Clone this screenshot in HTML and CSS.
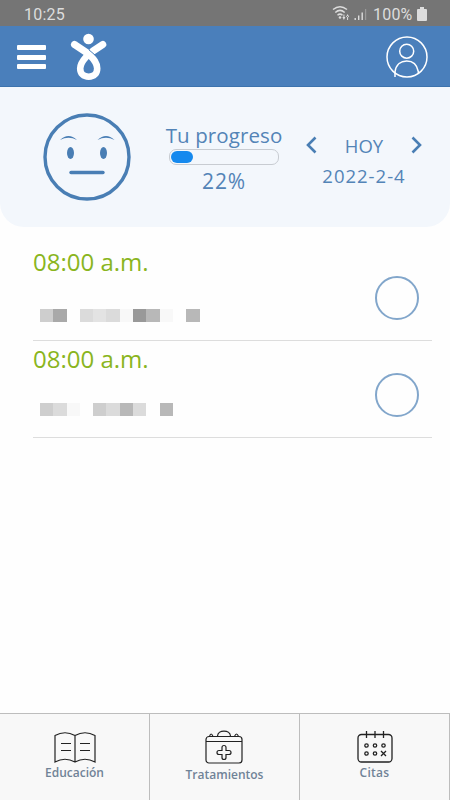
FILE: index.html
```
<!DOCTYPE html>
<html lang="es">
<head>
    <meta charset="UTF-8">
    <title>Mi progreso</title>
    <link rel="stylesheet" href="styles.css">
</head>
<body>
    <div class="status">
        <span class="clock">10:25</span>
        <svg class="signal" width="38" height="18" viewBox="0 0 38 18">
            <g fill="none" stroke="#ddd" stroke-width="1.5">
                <path d="M1 6.500Q8 1 15 6.500"/>
                <path d="M3.300 9.500Q8 5.300 12.700 9.500"/>
                <path d="M5.500 12.200Q8 10 10.500 12.200"/>
            </g>
            <circle cx="8" cy="14.500" r="1.300" fill="#ddd"/>
            <path d="M10.400 14h3l-1.500 3zM14 14h3.200l-1.600-3zM11.400 11.500h1v3h-1zM15.100 13h1v4h-1z" fill="#ddd"/>
            <path d="M22.500 15h1.400v2h-1.400zM26 12.500h1.400V17H26zM29.500 9.500h1.400V17h-1.400z" fill="#ddd"/>
            <path d="M33 6h1.200v11H33z" fill="#999"/>
        </svg>
        <span class="level">100%</span>
        <svg class="battery" width="10" height="14" viewBox="0 0 10 14">
            <path d="M3 0h4v2h2q1 0 1 1v10q0 1-1 1H1q-1 0-1-1V3q0-1 1-1h2z" fill="#ddd"/>
        </svg>
    </div>

    <div class="navbar">
        <div class="menu"><i></i><i></i><i></i></div>
        <svg class="logo" width="38" height="48" viewBox="0 0 38 48">
            <circle cx="18.500" cy="6" r="5.300" fill="#fff"/>
            <g fill="none" stroke="#fff" stroke-linecap="round">
                <path d="M4.500 11.500L18 20.500" stroke-width="7"/>
                <path d="M32.800 11.500L23 18" stroke-width="7"/>
                <path d="M18.700 21C15 25.500 10.200 29 10.200 35.500C10.200 40.500 13.500 43.700 18.700 43.700S27.200 40.500 27.200 35.500C27.200 29 22.500 25 18.700 21Z" stroke-width="6.600"/>
            </g>
            <path d="M18.500 16.500L25 22" stroke="#4a7fbb" stroke-width="1"/>
        </svg>
        <svg class="user" width="42" height="42" viewBox="0 0 42 42" fill="none" stroke="#fff" stroke-width="1.500">
            <circle cx="21" cy="21" r="20"/>
            <circle cx="20.700" cy="15.200" r="7"/>
            <path d="M9 41V36C10 28.500 15 25 20.700 25S31 28.500 32.300 35.500V38"/>
        </svg>
    </div>

    <div class="summary">
        <svg class="face" width="88" height="88" viewBox="0 0 88 88">
            <circle cx="44" cy="44" r="42" fill="none" stroke="#497eb4" stroke-width="3.400"/>
            <g fill="#497eb4">
                <ellipse cx="27.500" cy="40" rx="3.500" ry="6"/>
                <ellipse cx="60.500" cy="40" rx="3.500" ry="6"/>
                <path d="M17 27Q25.500 19 34 27Q25.500 22.500 17 27Z"/>
                <path d="M54.500 27Q63 19 71.500 27Q63 22.500 54.500 27Z"/>
            </g>
            <path d="M28 59.500H60" stroke="#497eb4" stroke-width="3.400" stroke-linecap="round"/>
        </svg>
        <div class="progress">
            <div class="title">Tu progreso</div>
            <div class="track"><div class="fill"></div></div>
            <div class="percent">22%</div>
        </div>
        <div class="date">
            <div class="day">
                <svg width="11" height="18" viewBox="0 0 11 18"><path d="M9.500 1.500L2 9L9.500 16.500"/></svg>
                <span>HOY</span>
                <svg width="11" height="18" viewBox="0 0 11 18"><path d="M1.500 1.500L9 9L1.500 16.500"/></svg>
            </div>
            <div class="full">2022-2-4</div>
        </div>
    </div>

    <div class="list">
        <div class="item first">
            <div>
                <div class="hour">08:00 a.m.</div>
                <div class="name">
                    <i class="g3"></i><i class="g5"></i><i></i><i class="g2"></i><i class="g1"></i><i class="g2"></i><i class="g0"></i><i class="g6"></i><i class="g4"></i><i class="g0"></i><i></i><i class="g4"></i>
                </div>
            </div>
            <div class="check"></div>
        </div>
        <div class="item">
            <div>
                <div class="hour">08:00 a.m.</div>
                <div class="name">
                    <i class="g3"></i><i class="g2"></i><i class="g0"></i><i></i><i class="g3"></i><i class="g2"></i><i class="g4"></i><i class="g2"></i><i></i><i class="g4"></i>
                </div>
            </div>
            <div class="check"></div>
        </div>
    </div>

    <div class="tabs">
        <div class="tab">
            <svg width="42" height="32" viewBox="0 0 42 32" fill="none" stroke="#222" stroke-width="1.200">
                <path d="M21 3.500Q11-2 1 3.500V30Q11 24.500 21 30Q31 24.500 41 30V3.500Q31-2 21 3.500V30"/>
                <path d="M7 11.500H17M7 18.500H17M26 11.500H36M26 18.500H36"/>
            </svg>
            <span>Educación</span>
        </div>
        <div class="tab treat">
            <svg width="38" height="34" viewBox="0 0 38 34" fill="none" stroke="#222" stroke-width="1.200">
                <rect x="1" y="6.500" width="36" height="26.500" rx="3"/>
                <path d="M1 11.500H37M12.500 6C13-.5 25-.5 25.500 6M4.500 6.500Q6 1.500 8 6.500M29.500 6.500Q31.500 1.500 33.500 6.500"/>
                <path d="M17 19.500V17.500Q17 15.500 19 15.500T21 17.500V20.500H24Q26 20.500 26 22.500T24 24.500H21V27.500Q21 29.500 19 29.500T17 27.500V24.500H14Q12 24.500 12 22.500T14 20.500H17Z"/>
            </svg>
            <span>Tratamientos</span>
        </div>
        <div class="tab citas">
            <svg width="36" height="32" viewBox="0 0 36 32" fill="none" stroke="#222" stroke-width="1.300">
                <rect x="1" y="3.500" width="34" height="27.500" rx="3.500"/>
                <path d="M9.500 0V7M18 0V7M26.500 0V7"/>
                <circle cx="9.500" cy="14.500" r="1.700"/>
                <circle cx="18" cy="14.500" r="1.700"/>
                <circle cx="26.500" cy="14.500" r="1.700"/>
                <circle cx="9.500" cy="22.500" r="1.700"/>
                <circle cx="18" cy="22.500" r="1.700"/>
                <path d="M24 20L29 25M29 20L24 25"/>
            </svg>
            <span>Citas</span>
        </div>
    </div>
</body>
</html>
```
FILE: styles.css
```
* {
    box-sizing: border-box;
}
body {
    font-family: 'Open Sans', 'Noto Sans', sans-serif;
    margin: 0;
    height: 800px;
    display: flex;
    flex-direction: column;
    background: #fefefe;
    overflow: hidden;
    white-space: nowrap;
}
.status {
    height: 26px;
    background: #757575;
    color: #ddd;
    font: 16px/29px Roboto, sans-serif;
    letter-spacing: 0.2px;
    display: flex;
    padding: 0 23px 0 24px;
}
.clock {
    flex: 1;
}
.signal {
    margin: 3px 3px 0 0;
}
.level {
    width: 40px;
    margin-right: 4px;
}
.battery {
    margin-top: 7px;
}
.navbar {
    height: 61px;
    background: #4a7fbb;
    border-bottom: 1px solid #3d73ad;
    display: flex;
    padding: 0 22px 0 17px;
}
.menu {
    width: 29px;
    margin-top: 19px;
}
.menu i {
    display: block;
    height: 5px;
    margin-bottom: 4.5px;
    border-radius: 1px;
    background: white;
}
.logo {
    margin: 7px 0 0 24px;
}
.user {
    margin: 10px 0 0 auto;
}
.summary {
    height: 140px;
    background: #f3f7fc;
    border-radius: 0 0 24px 24px;
    color: #5384b7;
    display: flex;
}
.face {
    margin: 26px 0 0 43px;
}
.progress {
    width: 120px;
    margin: 34px 0 0 33px;
    text-align: center;
}
.title {
    font-size: 20.5px;
    line-height: 29px;
    height: 28px;
    letter-spacing: 0.1px;
}
.track {
    width: 110px;
    height: 16px;
    margin: 0 auto;
    padding: 1px;
    border: 1px solid #c8ccd2;
    border-radius: 7px;
}
.fill {
    width: 22px;
    height: 12px;
    border-radius: 6px;
    background: #1589ee;
}
.percent {
    font-size: 21px;
    line-height: 32px;
    letter-spacing: 0.8px;
}
.date {
    width: 116px;
    margin: 44px 0 0 22px;
    text-align: center;
    font-size: 18.5px;
}
.day {
    display: flex;
    justify-content: space-between;
    align-items: center;
    height: 29px;
}
.day svg {
    fill: none;
    stroke: #497eb4;
    stroke-width: 2.6;
    margin-top: -2px;
}
.full {
    line-height: 31px;
    letter-spacing: 1px;
}
.list {
    flex: 1;
    padding: 0 18px 0 33px;
}
.item {
    height: 97px;
    border-bottom: 1px solid #ddd;
    display: flex;
    justify-content: space-between;
}
.first {
    height: 114px;
    padding-top: 17px;
}
.hour {
    color: #8ab51e;
    font-size: 24px;
    line-height: 36px;
}
.name {
    display: flex;
    margin: 29px 0 0 7px;
}
.item + .item .name {
    margin-top: 26px;
}
.name i {
    width: 13.3px;
    height: 13px;
}
.g0 { background: #f8f8f8; }
.g1 { background: #e3e3e3; }
.g2 { background: #dbdbdb; }
.g3 { background: #cecece; }
.g4 { background: #b8b8b8; }
.g5 { background: #a9a9a9; }
.g6 { background: #999999; }
.check {
    width: 44px;
    height: 44px;
    margin: 32px 13px 0 0;
    border: 2px solid #82a6cb;
    border-radius: 50%;
}
.tabs {
    height: 87px;
    display: flex;
    background: #f8f8f8;
    border-top: 1px solid #bdbdbd;
}
.tab {
    width: 150px;
    padding-top: 18px;
    border-right: 1px solid #bdbdbd;
    display: flex;
    flex-direction: column;
    align-items: center;
    color: #708397;
    font-size: 12px;
    line-height: 18px;
    font-weight: 600;
}
.treat {
    padding-top: 16px;
}
.citas {
    padding-top: 17px;
}
.treat svg {
    margin-left: -1px;
}
.treat span {
    margin-top: 2px;
}
.citas span {
    margin-top: 1px;
    letter-spacing: 0.3px;
}
```
